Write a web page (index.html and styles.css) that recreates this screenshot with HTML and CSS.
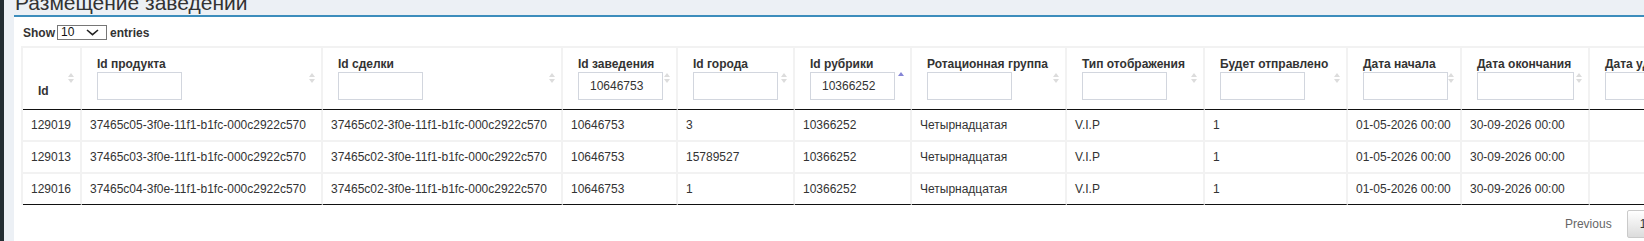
FILE: index.html
```html
<!DOCTYPE html>
<html lang="ru">
<head>
  <meta charset="UTF-8" />
  <meta name="viewport" content="width=device-width, initial-scale=1" />
  <title>Размещение заведений</title>
  <link rel="stylesheet" href="styles.css">
</head>

<body>
  <div class="wrapper">
    <aside class="sidebar"></aside>

    <main class="content">
      <h1 class="page-title">Размещение заведений</h1>

      <section class="box">
        <div class="dt-length">
          <span>Show</span>
          <span class="select-wrap">
            <select>
              <option value="10">10</option>
              <option value="25">25</option>
              <option value="50">50</option>
              <option value="100">100</option>
            </select>
            <svg class="chev" width="13" height="7" viewBox="0 0 13 7"><path d="M1 1L6.5 5.6L12 1" fill="none" stroke="#222" stroke-width="1.6"/></svg>
          </span>
          <span>entries</span>
        </div>

        <table class="dt">
          <thead>
            <tr>
              <th class="sorting col-id">Id</th>
              <th class="sorting col-product"><span class="th-title">Id продукта</span><input type="text" class="col-filter"></th>
              <th class="sorting col-deal"><span class="th-title">Id сделки</span><input type="text" class="col-filter"></th>
              <th class="sorting col-place"><span class="th-title">Id заведения</span><input type="text" class="col-filter" value="10646753"></th>
              <th class="sorting col-city"><span class="th-title">Id города</span><input type="text" class="col-filter"></th>
              <th class="sorting-asc col-rubric"><span class="th-title">Id рубрики</span><input type="text" class="col-filter" value="10366252"></th>
              <th class="sorting col-rotation"><span class="th-title">Ротационная группа</span><input type="text" class="col-filter"></th>
              <th class="sorting col-display"><span class="th-title">Тип отображения</span><input type="text" class="col-filter"></th>
              <th class="sorting col-send"><span class="th-title">Будет отправлено</span><input type="text" class="col-filter"></th>
              <th class="sorting col-start"><span class="th-title">Дата начала</span><input type="text" class="col-filter"></th>
              <th class="sorting col-end"><span class="th-title">Дата окончания</span><input type="text" class="col-filter wide"></th>
              <th class="sorting col-deleted"><span class="th-title">Дата удаления</span><input type="text" class="col-filter wide"></th>
            </tr>
          </thead>
          <tbody>
            <tr>
              <td>129019</td>
              <td>37465c05-3f0e-11f1-b1fc-000c2922c570</td>
              <td>37465c02-3f0e-11f1-b1fc-000c2922c570</td>
              <td>10646753</td>
              <td>3</td>
              <td>10366252</td>
              <td>Четырнадцатая</td>
              <td>V.I.P</td>
              <td>1</td>
              <td>01-05-2026 00:00</td>
              <td>30-09-2026 00:00</td>
              <td></td>
            </tr>
            <tr>
              <td>129013</td>
              <td>37465c03-3f0e-11f1-b1fc-000c2922c570</td>
              <td>37465c02-3f0e-11f1-b1fc-000c2922c570</td>
              <td>10646753</td>
              <td>15789527</td>
              <td>10366252</td>
              <td>Четырнадцатая</td>
              <td>V.I.P</td>
              <td>1</td>
              <td>01-05-2026 00:00</td>
              <td>30-09-2026 00:00</td>
              <td></td>
            </tr>
            <tr>
              <td>129016</td>
              <td>37465c04-3f0e-11f1-b1fc-000c2922c570</td>
              <td>37465c02-3f0e-11f1-b1fc-000c2922c570</td>
              <td>10646753</td>
              <td>1</td>
              <td>10366252</td>
              <td>Четырнадцатая</td>
              <td>V.I.P</td>
              <td>1</td>
              <td>01-05-2026 00:00</td>
              <td>30-09-2026 00:00</td>
              <td></td>
            </tr>
          </tbody>
        </table>

        <div class="dt-paginate">
          <span class="pg-btn disabled">Previous</span>
          <span class="pg-btn current">1</span>
          <span class="pg-btn disabled">Next</span>
        </div>
      </section>
    </main>
  </div>
</body>
</html>
```

FILE: styles.css
```css
html, body {
  margin: 0;
  height: 100%;
  overflow: hidden;
}

body {
  font-family: "Liberation Sans", Arial, sans-serif;
  font-size: 12px;
  color: #333;
  background-color: #ecf0f5;
}

.wrapper {
  display: flex;
  min-height: 100%;
}

.sidebar {
  flex: none;
  width: 4px;
  background-color: #222d32;
}

.content {
  flex: none;
  display: flex;
  flex-direction: column;
  padding-left: 10px;
}

.page-title {
  margin: -9px 0 0 1px;
  height: 24px;
  font-size: 21px;
  line-height: 24px;
  font-weight: normal;
  color: #333;
  white-space: nowrap;
}

.box {
  flex: 1;
  width: 1691px;
  padding: 0 7px;
  background-color: #fff;
  border-top: 2px solid #3c8dbc;
}

/* length menu */
.dt-length {
  display: flex;
  align-items: center;
  height: 15px;
  margin: 8px 0 0 2px;
  font-weight: bold;
}

.select-wrap {
  position: relative;
  margin: 0 3px 0 2px;
}

.select-wrap select {
  display: block;
  appearance: none;
  -webkit-appearance: none;
  width: 50px;
  height: 15px;
  margin: 0;
  padding: 0 0 0 3px;
  border: 1px solid #767676;
  border-radius: 0;
  background-color: #fff;
  font-family: inherit;
  font-size: 12px;
  line-height: 13px;
  color: #111;
}

.chev {
  position: absolute;
  left: 29px;
  top: 4px;
  pointer-events: none;
}

/* table */
.dt {
  width: 1691px;
  box-sizing: border-box;
  margin-top: 6px;
  table-layout: fixed;
  border-collapse: separate;
  border-spacing: 0;
  border-top: 2px solid #f2f2f2;
  border-left: 2px solid #f2f2f2;
}

.dt th {
  position: relative;
  box-sizing: border-box;
  padding: 9px 18px 9px 15px;
  border-right: 2px solid #f2f2f2;
  border-bottom: 1px solid #111;
  text-align: left;
  vertical-align: bottom;
  font-weight: bold;
  line-height: 15px;
}

.dt th.col-id {
  padding-bottom: 10px;
}

.th-title {
  display: block;
  white-space: nowrap;
}

.col-filter {
  display: block;
  box-sizing: border-box;
  width: 85px;
  height: 28px;
  margin: 0;
  padding: 0 11px;
  border: 1px solid #d2d6de;
  font-family: inherit;
  font-size: 12px;
  color: #333;
}

.col-filter.wide {
  width: 97px;
}

.dt th.sorting::before,
.dt th.sorting::after,
.dt th.sorting-asc::before {
  content: "";
  position: absolute;
  right: 6px;
  top: 50%;
  border-left: 3.5px solid transparent;
  border-right: 3.5px solid transparent;
}

.dt th.sorting::before {
  margin-top: -6px;
  border-bottom: 4px solid #dcdcdc;
}

.dt th.sorting::after {
  margin-top: 0;
  border-top: 4px solid #dcdcdc;
}

.dt th.sorting-asc::before {
  margin-top: -7px;
  border-bottom: 4px solid #8585d6;
}

.col-id { width: 59px; }
.col-product { width: 241px; }
.col-deal { width: 240px; }
.col-place { width: 115px; }
.col-city { width: 117px; }
.col-rubric { width: 117px; }
.col-rotation { width: 155px; }
.col-display { width: 138px; }
.col-send { width: 143px; }
.col-start { width: 114px; }
.col-end { width: 128px; }
.col-deleted { width: 122px; }

.dt td {
  height: 30px;
  box-sizing: border-box;
  padding: 8px;
  border-right: 2px solid #f2f2f2;
  border-bottom: 2px solid #f2f2f2;
  line-height: 14px;
  white-space: nowrap;
  overflow: hidden;
}

.dt tbody tr:last-child td {
  border-bottom: 1px solid #111;
}

/* pagination */
.dt-paginate {
  display: flex;
  justify-content: flex-end;
  margin-top: 5px;
}

.pg-btn {
  margin-left: 2px;
  padding: 6px 12px;
  border: 1px solid transparent;
  border-radius: 2px;
  line-height: 14px;
  color: #333;
}

.pg-btn.disabled {
  color: #666;
}

.pg-btn.current {
  border-color: #cacaca;
  background: linear-gradient(to bottom, #fff 0%, #dcdcdc 100%);
}
```
